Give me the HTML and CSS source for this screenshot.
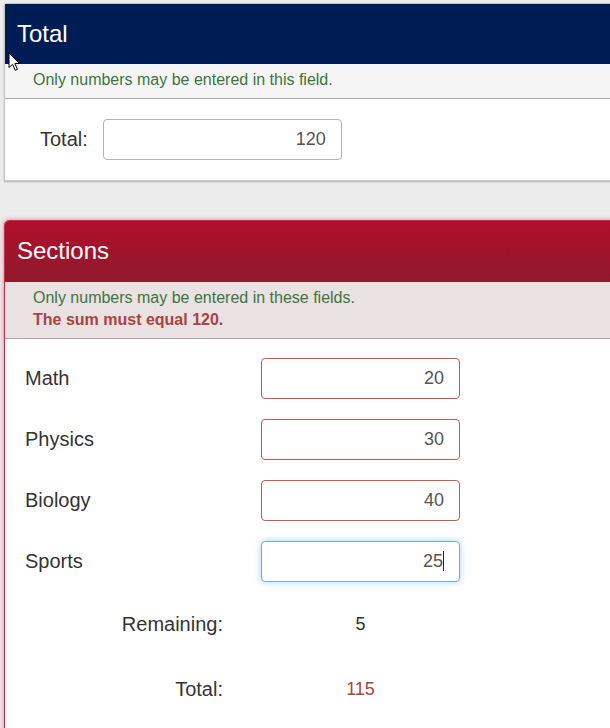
FILE: index.html
```html
<!DOCTYPE html>
<html lang="en">
<head>
<meta charset="utf-8">
<title>Totals</title>
<link rel="stylesheet" href="styles.css">
</head>
<body>
<div class="page">
  <section class="panel panel-total">
    <header class="panel-head navy"><h2>Total</h2></header>
    <div class="panel-msg grey">
      <p class="ok">Only numbers may be entered in this field.</p>
    </div>
    <div class="panel-body total-body">
      <span class="label">Total:</span>
      <div class="field wide">120</div>
    </div>
  </section>

  <section class="panel panel-sections">
    <header class="panel-head red"><h2>Sections</h2></header>
    <div class="panel-msg pink">
      <p class="ok">Only numbers may be entered in these fields.</p>
      <p class="err">The sum must equal 120.</p>
    </div>
    <div class="panel-body sections-grid">
      <span class="label">Math</span>
      <div class="field invalid">20</div>
      <span class="label">Physics</span>
      <div class="field invalid">30</div>
      <span class="label">Biology</span>
      <div class="field invalid">40</div>
      <span class="label">Sports</span>
      <div class="field focus">25<span class="caret"></span></div>
      <span class="label sum-label">Remaining:</span>
      <span class="sum-value">5</span>
      <span class="label sum-label">Total:</span>
      <span class="sum-value bad">115</span>
    </div>
  </section>

  <svg class="cursor" width="13" height="20" viewBox="0 0 13 20" aria-hidden="true">
    <path d="M1 1 L1 15.5 L4.6 12.3 L7.2 18.3 L9.4 17.4 L6.9 11.5 L11.6 11.5 Z" fill="#fff" stroke="#000" stroke-width="1" stroke-linejoin="round"/>
  </svg>
</div>
</body>
</html>
```

FILE: styles.css
```css
html, body {
  margin: 0;
  padding: 0;
  overflow: hidden;
  background: #ececec;
}

body {
  font-family: "Liberation Sans", Arial, Helvetica, sans-serif;
  font-size: 16px;
  color: #333;
}

.page {
  position: relative;
  padding: 3px 0 0 4px;
  width: 720px;
}

.panel {
  background: #fff;
  border: 1px solid #c6c6c6;
  border-radius: 3px 3px 0 0;
  box-shadow: 0 1px 2px rgba(0, 0, 0, 0.25);
}

.panel-sections {
  margin-top: 39px;
  border-color: #c0304c;
  border-radius: 5px 5px 0 0;
  box-shadow: 0 0 5px rgba(205, 40, 70, 0.55);
  min-height: 520px;
}

.panel-head {
  display: flex;
  align-items: center;
  padding: 0 12px 1px;
}

.panel-head h2 {
  margin: 0;
  font-size: 24px;
  font-weight: normal;
  color: #fff;
  line-height: 28px;
}

.navy {
  height: 59px;
  background: #001c55;
}

.red {
  height: 60px;
  background: linear-gradient(to bottom, #b10e29, #901a2d);
  border-radius: 4px 4px 0 0;
}

.panel-msg {
  padding: 5px 28px 7px;
  border-bottom: 1px solid #a9a9a9;
  line-height: 22px;
}

.panel-msg p {
  margin: 0;
}

.grey { background: #f5f5f5; }
.pink { background: #e9e1e2; }

.ok { color: #3c763d; }
.err { color: #a94442; font-weight: bold; }

.label {
  font-size: 20px;
  color: #333;
}

.field {
  box-sizing: border-box;
  height: 41px;
  border: 1px solid #b4b4b4;
  border-radius: 4px;
  background: #fff;
  font-size: 18px;
  color: #555;
  text-align: right;
  padding: 0 15px;
  line-height: 39px;
}

.total-body {
  display: flex;
  align-items: center;
  gap: 15px;
  padding: 20px 0 20px 35px;
}

.wide { width: 239px; }

.sections-grid {
  display: grid;
  grid-template-columns: 236px 199px;
  grid-template-rows: repeat(4, 41px) 45px 45px;
  row-gap: 20px;
  align-items: center;
  padding: 19px 0 0 20px;
}

.sum-label {
  text-align: right;
  padding-right: 38px;
}

.sum-value {
  text-align: center;
  font-size: 18px;
  color: #333;
}

.sum-value.bad { color: #a94442; }

.invalid { border-color: #d0554b; }

.focus {
  border-color: #66afe9;
  box-shadow: 0 0 7px rgba(102, 175, 233, 0.55);
}

.caret {
  display: inline-block;
  width: 1px;
  height: 20px;
  background: #222;
  vertical-align: -4px;
}

.cursor {
  position: absolute;
  left: 8px;
  top: 52px;
}
```
